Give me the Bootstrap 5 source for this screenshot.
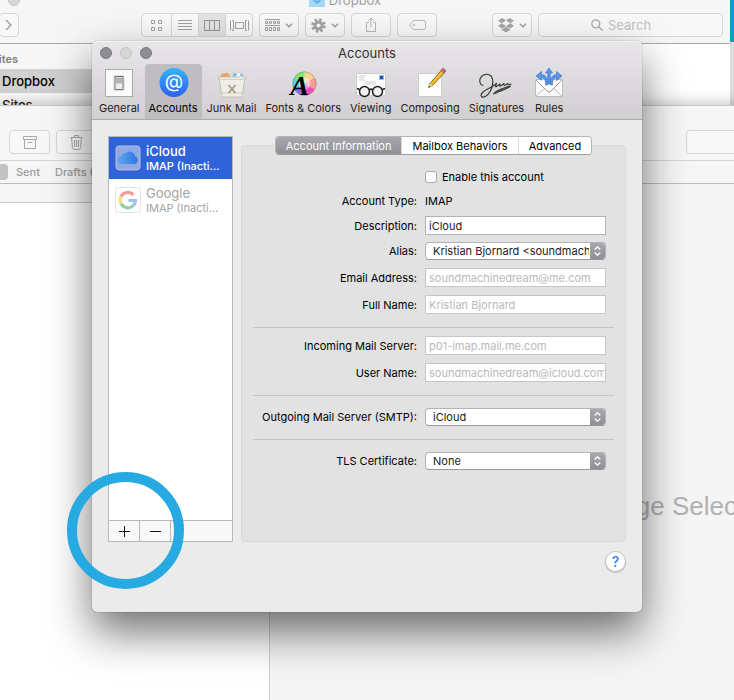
<!DOCTYPE html>
<html lang="en">
<head>
<meta charset="utf-8">
<meta name="viewport" content="width=device-width, initial-scale=1">
<title>Accounts</title>
<link href="https://cdn.jsdelivr.net/npm/bootstrap@5.3.0/dist/css/bootstrap.min.css" rel="stylesheet">
<style>
  body { font-family: Inter, "Liberation Sans", sans-serif; font-size: 11px; line-height: 14px; color: #000; }
  button { font-family: inherit; }
  svg { display: block; flex: none; }
  .desktop { background: #dcdcdc; }
  .desk-strip { top: 0; right: 0; width: 6px; height: 41px; background: #009fc8; border-bottom: 1px solid #777; box-sizing: content-box; }
  .win { position: absolute; }

  /* file browser window */
  .finder { top: -11px; left: -40px; right: 4px; height: 160px; background: #fff; }
  .finder-head { background: #f6f6f6; border-bottom: 1px solid #a9a9a9; }
  .finder-title { height: 22px; font-size: 13px; color: #a0a0a0; }
  .light { width: 12px; height: 12px; border-radius: 50%; border: 1px solid #c4c4c4; background: #d6d6d6; }
  .light.on { background: #8e8d92; border-color: #7b7a7f; }
  .finder-title .lights { left: 8px; top: 5px; }
  .finder-tools { padding: 2px 7px 6px 19px; gap: 6px; }
  .tool { height: 24px; min-width: 40px; padding: 0; border: 1px solid #d6d6d6; border-radius: 4px; background: #f8f8f8; color: #a6a6a6; display: inline-flex; align-items: center; justify-content: center; gap: 5px; }
  .tool.narrow { min-width: 20px; }
  .tool-group { margin-left: 116px; }
  .tool-group .tool { min-width: 28px; border-radius: 0; margin-left: -1px; width: 28px; }
  .tool-group .tool:first-child { border-radius: 4px 0 0 4px; margin-left: 0; width: 31px; }
  .tool-group .tool:last-child { border-radius: 0 4px 4px 0; }
  .tool-group .tool.picked { background: #e2e2e2; }
  .cloud-tool { margin-left: 49px; }
  .find-box { font-size: 13px; color: #c2c2c2; }
  .find-box input { width: 62px; border: 0; padding: 0; background: none; font-size: 13px; color: #c2c2c2; }
  .find-box input::placeholder { color: #c2c2c2; opacity: 1; }
  .places { width: 172px; background: #f7f7f7; font-size: 13px; padding-top: 7px; }
  .places h2 { font-size: 11px; line-height: 17px; font-weight: 600; color: #7c7c7c; padding-left: 9px; margin: 0 0 1px; }
  .places a { display: block; padding-left: 42px; line-height: 24px; height: 24px; color: #222; text-decoration: none; font-weight: 500; }
  .places a.picked { background: #d0d0d0; color: #000; }

  /* mail window */
  .mail { top: 105px; left: 0; right: -316px; bottom: -128px; background: #f6f6f6; border-top: 1px solid #c8c8c8; box-shadow: 0 0 14px rgba(0,0,0,.3); }
  .mail-tools { padding: 24px 8px 6px 9px; gap: 6px; border-bottom: 1px solid #d3d3d3; }
  .mail-tools .tool { min-width: 41px; }
  .mail-find { width: 356px; margin-left: auto; }
  .mail-favs { height: 23px; border-bottom: 1px solid #bdbdbd; color: #9c9c9c; gap: 15px; }
  .mail-favs a { color: inherit; text-decoration: none; font-weight: 500; }
  .fav-pill { width: 8px; height: 16px; background: #c2c2c2; border-radius: 0 4px 4px 0; margin-right: -7px; }
  .messages { width: 270px; border-right: 1px solid #d0d0d0; background: #fff; }
  .messages-sort { height: 19px; background: #f6f6f6; border-bottom: 1px solid #c6c6c6; }
  .reader { background: #f5f5f5; color: #b2b2b2; font-family: "Liberation Sans", Arial, sans-serif; font-size: 26px; line-height: 32px; padding-right: 28px; }

  /* accounts dialog */
  .prefs { top: 41px; left: 92px; right: 92px; background: #ebebeb; border-radius: 5px; box-shadow: 0 0 1px rgba(0,0,0,.6), 0 20px 44px rgba(0,0,0,.56); }
  .prefs-head { background: linear-gradient(#e8e6e8, #d1cfd1); border-bottom: 1px solid #ababab; border-radius: 5px 5px 0 0; border-top: 1px solid #f4f3f4; }
  .prefs-title { height: 22px; font-size: 13px; color: #333; }
  .prefs-title .lights { left: 8px; top: 5px; }
  .lights { gap: 8px; }
  .prefs-tabs { padding-left: 3px; gap: 1px; }
  .pane-tab { border: 0; background: none; padding: 4px 4px 3px; height: 55px; font-size: 11px; line-height: 16px; color: #1c1c1c; border-radius: 4px 4px 0 0; display: flex; flex-direction: column; align-items: center; white-space: nowrap; }
  .pane-tab.picked { background: #bfbdc0; color: #000; }
  .prefs-body { padding: 16px 16px 40px; }
  .accounts { width: 125px; border: 1px solid #b9b9b9; background: #fff; }
  .account { border: 0; width: 100%; height: 42px; padding: 0 6px; gap: 5px; background: #fff; color: #a3a3a3; text-align: left; }
  .account.picked { background: #2f63d9; color: #fff; }
  .account b { display: block; font-size: 13px; line-height: 15px; font-weight: 400; }
  .account small { display: block; font-size: 11px; line-height: 14px; }
  .account.picked b, .account.picked small { font-weight: 500; }
  .list-foot { border-top: 1px solid #b9b9b9; background: #f8f8f8; height: 21px; }
  .list-foot button { width: 31px; border: 0; border-right: 1px solid #b9b9b9; background: none; padding: 0; color: #111; }
  .halo { left: -42px; top: -49px; width: 117px; height: 117px; border: 10px solid #27aae1; border-radius: 50%; pointer-events: none; }
  .panel { margin-top: 9px; margin-left: 8px; padding: 0 11px 71px; background: #e2e2e2; border: 1px solid #d9d9d9; border-radius: 4px; }
  .seg { margin-top: -10px; border-radius: 4px; border: 1px solid #b4b4b4; border-bottom-color: #9c9c9c; background: #fff; overflow: hidden; }
  .seg button { border: 0; background: #fff; height: 17px; padding: 0 10px; font-size: 11px; line-height: 16px; white-space: nowrap; }
  .seg button + button { border-left: 1px solid #d9d9d9; }
  .seg button.picked { background: linear-gradient(#a9a8ae, #908f95); color: #fff; }
  .frow { display: grid; grid-template-columns: 164px minmax(0, 1fr); column-gap: 8px; padding-right: 8px; min-height: 19px; align-items: center; }
  .frow label, .frow .cap { text-align: right; white-space: nowrap; }
  .frow label.enable { text-align: left; }
  .frow .box { height: 19px; border: 1px solid #b3b3b3; border-radius: 0; background: #fff; padding: 0 1px 0 3px; font-size: 11px; color: #222; width: 100%; min-width: 0; }
  .frow .box:disabled { color: #b9b9b9; border-color: #c6c6c6; opacity: 1; }
  .pop { display: grid; height: 18px; border: 1px solid #b4b4b4; border-bottom-color: #989898; border-radius: 4px; background: #fff; overflow: hidden; }
  .pop select { grid-area: 1/1; appearance: none; border: 0; background: none; padding: 0 0 0 7px; margin-right: 16px; font-size: 11px; line-height: 16px; color: #222; min-width: 0; }
  .pop span { grid-area: 1/1; justify-self: end; width: 15px; background: linear-gradient(#a9a8ae, #908f95); display: grid; place-items: center; pointer-events: none; }
  .tickbox { appearance: none; width: 12px; height: 12px; border: 1px solid #a9a9a9; border-radius: 3px; background: #fff; margin: 0 5px 0 0; }
  .g5 { margin-top: 5px; } .g6 { margin-top: 6px; } .g8 { margin-top: 8px; } .g12 { margin-top: 12px; }
  .rule { margin: 13px 0 0; border: 0; border-top: 1px solid #c6c6c6; opacity: 1; }
  .rule + .g12 { margin-top: 11px; }
  .help { width: 21px; height: 21px; border-radius: 50%; border: 1px solid #c2c2c2; background: #fff; color: #2b78f5; font-size: 14px; line-height: 18px; font-weight: 500; padding: 0; margin-top: 9px; box-shadow: 0 1px 1px rgba(0,0,0,.2); }
</style>
<script src="https://cdn.jsdelivr.net/npm/bootstrap@5.3.0/dist/js/bootstrap.bundle.min.js"></script>
</head>
<body>
<div class="desktop position-relative overflow-hidden vh-100">
  <div class="desk-strip position-absolute"></div>

  <section class="win finder" aria-label="Dropbox">
    <div class="finder-head">
      <div class="finder-title d-flex align-items-center justify-content-center position-relative">
        <div class="lights d-flex position-absolute"><span class="light"></span><span class="light"></span><span class="light"></span></div>
        <svg class="me-1" width="16" height="14" viewBox="0 0 16 14"><path d="M0 1h6l1 1h9v12H0z" fill="#8fcdf0"/><path d="M0 4h16v10H0z" fill="#a3d9f6"/><path d="M5 6l3 2 3-2 1 2-4 3-4-3z" fill="#68b4e2"/></svg>
        <span>Dropbox</span>
      </div>
      <div class="finder-tools d-flex">
        <div class="d-flex">
          <button class="tool narrow" aria-label="Back"></button>
          <button class="tool narrow" aria-label="Forward"><svg width="8" height="12" viewBox="0 0 8 12" fill="none" stroke="#a6a6a6" stroke-width="1.5"><path d="M1 1l5 5-5 5"/></svg></button>
        </div>
        <div class="tool-group d-flex">
          <button class="tool" aria-label="Icons"><svg width="11" height="11" fill="none" stroke="#a0a0a0"><path d="M.5.5h3v3h-3zM7.500.5h3v3h-3zM.5 7.500h3v3h-3zM7.500 7.500h3v3h-3z"/></svg></button>
          <button class="tool" aria-label="List"><svg width="14" height="11" stroke="#a0a0a0"><path d="M0 .5h14M0 3.500h14M0 6.500h14M0 9.500h14"/></svg></button>
          <button class="tool picked" aria-label="Columns"><svg width="16" height="11" fill="none" stroke="#949494"><path d="M.5.5h15v10H.5zM5.500.5v10M10.500.5v10"/></svg></button>
          <button class="tool" aria-label="Cover flow"><svg width="19" height="11" fill="none" stroke="#a0a0a0"><path d="M5.500 2.500h8v6h-8zM.5.500v10M2 .500h1.500v10H2M18.500.500v10M17 .500h-1.500v10H17"/></svg></button>
        </div>
        <button class="tool" aria-label="Arrange"><svg width="15" height="13" fill="none" stroke="#a0a0a0"><path d="M0 .5h15M0 6.500h15M.5 2.500h2v2h-2zM4.500 2.500h2v2h-2zM8.500 2.500h2v2h-2zM12.500 2.500h2v2h-2zM.5 8.500h2v3h-2zM4.500 8.500h2v3h-2zM8.500 8.500h2v3h-2zM12.500 8.500h2v3h-2z"/></svg><svg width="8" height="5" fill="none" stroke="#a0a0a0" stroke-width="1.500"><path d="M1 .7l3 3 3-3"/></svg></button>
        <button class="tool" aria-label="Actions"><svg width="15" height="15" viewBox="0 0 15 15"><circle cx="7.500" cy="7.500" r="3.600" fill="none" stroke="#a3a3a3" stroke-width="3"/><circle cx="7.500" cy="7.500" r="6" fill="none" stroke="#a3a3a3" stroke-width="2.600" stroke-dasharray="2.500 2.212"/></svg><svg width="8" height="5" fill="none" stroke="#a0a0a0" stroke-width="1.500"><path d="M1 .7l3 3 3-3"/></svg></button>
        <button class="tool" aria-label="Share"><svg width="12" height="16" fill="none" stroke="#b4b4b4"><path d="M4 5.500H1.500v9h9v-9H8M6 10V1M3.500 3.500L6 1l2.500 2.500"/></svg></button>
        <button class="tool" aria-label="Tags"><svg width="17" height="10" fill="none" stroke="#b9b9b9"><path d="M4.500.500h10q2 0 2 2v5q0 2-2 2h-10L.600 5z"/><circle cx="5" cy="5" r=".8"/></svg></button>
        <button class="tool cloud-tool" aria-label="Dropbox menu"><svg width="16" height="15" viewBox="0 0 16 15" fill="#a6a6a6"><path d="M4.500 0L8 2.400 3.500 5.200 0 2.500zM11.500 0L16 2.500l-3.500 2.700L8 2.400zM3.500 5.200L8 8 4.500 10.500 0 8zM12.500 5.200L16 8l-4.500 2.500L8 8zM8 8.800l3.500 2.400 1-.5v1L8 14.500l-4.500-2.800v-1l1 .5z"/></svg><svg width="8" height="5" fill="none" stroke="#a0a0a0" stroke-width="1.500"><path d="M1 .7l3 3 3-3"/></svg></button>
        <label class="tool find-box flex-grow-1"><svg width="12" height="12" fill="none" stroke="#a6a6a6" stroke-width="1.200"><circle cx="4.800" cy="4.800" r="4"/><path d="M7.800 7.800l3.700 3.700"/></svg><input type="text" placeholder="Search" aria-label="Search"></label>
      </div>
    </div>
    <nav class="places">
      <h2>Favorites</h2>
      <a href="#" class="picked">Dropbox</a>
      <a href="#">Sites</a>
    </nav>
  </section>

  <section class="win mail d-flex flex-column" aria-label="Mail">
    <div class="mail-tools d-flex">
      <button class="tool" aria-label="Archive"><svg width="14" height="13" fill="none" stroke="#a9a9a9"><path d="M.5.500h13v3H.5zM1.500 3.500v9h11v-9M4.500 6.500h5"/></svg></button>
      <button class="tool" aria-label="Delete"><svg width="13" height="15" fill="none" stroke="#a9a9a9"><path d="M.5 2.500h12M4.500 2.500v-2h4v2M1.500 2.500l1 10q.2 2 2 2h4q1.800 0 2-2l1-10M4.500 5v7M6.500 5v7M8.500 5v7"/></svg></button>
      <span class="tool mail-find"></span>
    </div>
    <nav class="mail-favs d-flex align-items-center">
      <span class="fav-pill"></span><a href="#">Sent</a><a href="#">Drafts (2)</a>
    </nav>
    <div class="d-flex flex-grow-1">
      <div class="messages"><div class="messages-sort"></div></div>
      <div class="reader flex-grow-1 d-flex align-items-center justify-content-center">No Message Selected</div>
    </div>
  </section>

  <section class="win prefs" role="dialog" aria-label="Accounts">
    <div class="prefs-head">
      <div class="prefs-title d-flex align-items-center justify-content-center position-relative">
        <div class="lights d-flex position-absolute"><span class="light on"></span><span class="light"></span><span class="light on"></span></div>
        <span>Accounts</span>
      </div>
      <div class="prefs-tabs d-flex">
        <button class="pane-tab"><svg width="32" height="32" viewBox="0 0 32 32"><rect x="2.500" y="1.500" width="27" height="27" fill="#fafafa" stroke="#aaa"/><rect x="10.500" y="7" width="11" height="16" rx="2" fill="#ddd"/><rect x="12" y="8.500" width="8" height="13" fill="#eee" stroke="#777"/><path d="M13 9.500h6v6h-6z" fill="#b5b5b5"/></svg><span>General</span></button>
        <button class="pane-tab picked"><svg width="32" height="32" viewBox="0 0 32 32"><defs><linearGradient id="at" x2="0" y2="1"><stop stop-color="#35b4fa"/><stop offset="1" stop-color="#2c5ff6"/></linearGradient></defs><circle cx="17" cy="14.500" r="14.500" fill="url(#at)"/><text x="17" y="20" text-anchor="middle" font-size="19" font-family="Inter" fill="#fff">@</text></svg><span>Accounts</span></button>
        <button class="pane-tab"><svg width="32" height="32" viewBox="0 0 32 32"><path d="M4 9l2-3 6-1 2 3 3-3 4 1 2-2 4 4v3H4z" fill="#f2f6fa" stroke="#bbb" stroke-width=".6"/><path d="M4 9l2-3 6-1 2 4z" fill="#f3a34d"/><path d="M16 8l2-3 3 1-1 3zM24 8l1-3 3 3z" fill="#78b9e4"/><path d="M2.500 9h27v3h-1l-2.500 17h-20L3.500 12h-1z" fill="#eeeee7" stroke="#bab9b2" stroke-width=".8"/><path d="M3 11.500h26M6 25h20" stroke="#d0cfc4"/><path d="M12.500 17l7 8M19.500 17l-7 8" stroke="#a09a83" stroke-width="1.700"/></svg><span>Junk Mail</span></button>
        <button class="pane-tab"><svg width="32" height="32" viewBox="0 0 32 32"><g transform="translate(17.500 15.500)"><path d="M0 0V-12A12 12 0 0 1 10.400-6z" fill="#ffd28a"/><path d="M0 0L10.400-6A12 12 0 0 1 10.400 6z" fill="#ff9a9a"/><path d="M0 0L10.400 6A12 12 0 0 1 0 12z" fill="#f34bb5"/><path d="M0 0V12A12 12 0 0 1-10.400 6z" fill="#9269f2"/><path d="M0 0L-10.400 6A12 12 0 0 1-10.400-6z" fill="#52d4e9"/><path d="M0 0L-10.400-6A12 12 0 0 1 0-12z" fill="#84e86c"/><circle r="11.600" fill="none" stroke="#888" stroke-width=".6"/><circle r="6" fill="#fff" opacity=".45"/></g><text x="12.500" y="27" text-anchor="middle" font-family="Liberation Serif" font-style="italic" font-weight="700" font-size="28" fill="#000">A</text></svg><span>Fonts &amp; Colors</span></button>
        <button class="pane-tab"><svg width="32" height="32" viewBox="0 0 32 32"><path d="M1.500 5.500h29v22h-29z" fill="#fff" stroke="#ccc"/><path d="M4 8h7M4 10h5M4 12h6M10 14h11M9 16h12" stroke="#bbb" stroke-width=".7"/><path d="M24 7h5v5h-5z" fill="#8cc4f2"/><path d="M25 8h3v3h-3z" fill="#1d4f9c"/><g fill="#eef1f2" fill-opacity=".8" stroke="#1d1d1d" stroke-width="1.500"><circle cx="9.500" cy="23.500" r="5"/><circle cx="22.500" cy="23.500" r="5"/><path d="M14.500 22q1.500-2 3 0M4.500 21.500l-2.500-1M27.500 21.500l2.500-1" fill="none"/></g></svg><span>Viewing</span></button>
        <button class="pane-tab"><svg width="32" height="32" viewBox="0 0 32 32"><path d="M4.500 5.500h23v23h-23z" fill="#fdfdfd" stroke="#ccc"/><path d="M14.500 19.500l1.500-4L28.500.900l3 2.600L18.500 17.500z" fill="#f5be2a" stroke="#75601c" stroke-width=".9"/><path d="M14.500 19.500l1.500-4 2.500 2z" fill="#e8cfa0"/><path d="M14.500 19.500l.6-1.600 1 .9z" fill="#222"/><path d="M27 2.600L29 0l3 2.500-2.200 2.700z" fill="#d6608b" stroke="#555" stroke-width=".5"/></svg><span>Composing</span></button>
        <button class="pane-tab"><svg width="34" height="32" viewBox="0 0 34 32" fill="none" stroke="#3c3c3c" stroke-width="1.200" stroke-linecap="round" stroke-linejoin="round"><path d="M4 17.500C1 17 0 13 1.500 10 3.500 6 9 5 12 8c3 3.500 2 11-1 15.500C9 27.500 4.500 30.500 2.500 28.500c-2-2.500 3-6 8-8.500 4-2 6-3.500 7-4.500-1 2-1.500 4 0 3s2.500-2 3.500-2.500c0 1.500-1 2.500.5 2l3.500-2.500c0 1-.5 2 .5 2s2.500-2 3.500-2c-.5 1 0 1.500 1 1.200l2-.7M14.500 26c2-3.500 9-5.500 17-8-3 3-8 4-11.500 5.500-2 1-3 2-3.500 2"/></svg><span>Signatures</span></button>
        <button class="pane-tab"><svg width="32" height="32" viewBox="0 0 32 32"><path d="M2.500 11.500h27v17h-27z" fill="#fafafa" stroke="#bdbdbd"/><path d="M3 28l9-8M29 28l-9-8" stroke="#bbb"/><path d="M3 12l11 11q2 2 4 0l11-11" fill="#fff" stroke="#999"/><g fill="#5796eb" stroke="#2b62b5" stroke-width=".5"><path d="M14.700 16V5h-2.200L16 0l3.500 5h-2.200v11z"/><path d="M12.500 17q.5-7-4-7.500v3L3 8l5.500-4.500v3q7 .5 6 10.500z"/><path d="M19.500 17q-.5-7 4-7.500v3L29 8l-5.500-4.500v3q-7 .5-6 10.500z"/></g></svg><span>Rules</span></button>
      </div>
    </div>

    <div class="prefs-body">
      <div class="d-flex">
        <div class="accounts d-flex flex-column flex-shrink-0">
          <button class="account picked d-flex align-items-center">
            <svg width="26" height="26" viewBox="0 0 26 26"><defs><linearGradient id="sky"><stop stop-color="#5aa9f2"/><stop offset="1" stop-color="#3173e1"/></linearGradient></defs><rect x="1" y="1" width="24" height="24" rx="3" fill="#90a9e6" stroke="#b6bfdc"/><path d="M7 19a4 4 0 0 1-.5-8 3.200 3.200 0 0 1 4-2.500 5.500 5.500 0 0 1 9.700 3A3.900 3.900 0 0 1 19.500 19z" fill="url(#sky)"/></svg>
            <span><b>iCloud</b><small>IMAP (Inacti…</small></span>
          </button>
          <button class="account d-flex align-items-center">
            <svg width="26" height="26" viewBox="0 0 26 26"><rect x=".5" y=".5" width="25" height="25" rx="3" fill="#fff" stroke="#e2e2e2"/><g fill="none" stroke-width="3.200"><path d="M18.500 7.800A7.800 7.800 0 0 0 6 9.500" stroke="#f29a94"/><path d="M6 9.500a7.800 7.800 0 0 0 0 7" stroke="#fbdd84"/><path d="M6 16.500a7.800 7.800 0 0 0 12 2.400" stroke="#99d1a6"/><path d="M18 18.900A7.300 7.300 0 0 0 20.500 13.500H13.500" stroke="#a1bdf8"/></g></svg>
            <span><b>Google</b><small>IMAP (Inacti…</small></span>
          </button>
          <div class="list-foot d-flex position-relative mt-auto">
            <button aria-label="Add account"><svg class="mx-auto" width="11" height="11" stroke="#111"><path d="M0 5.500h11M5.500 0v11"/></svg></button>
            <button aria-label="Remove account"><svg class="mx-auto" width="11" height="11" stroke="#111"><path d="M0 5.500h11"/></svg></button>
            <div class="halo position-absolute"></div>
          </div>
        </div>

        <form class="panel flex-grow-1">
          <div class="d-flex justify-content-center">
            <div class="seg d-flex">
              <button type="button" class="picked">Account Information</button>
              <button type="button">Mailbox Behaviors</button>
              <button type="button">Advanced</button>
            </div>
          </div>
          <div class="frow g12"><span></span><label class="enable d-flex align-items-center" for="on"><input class="tickbox" type="checkbox" id="on">Enable this account</label></div>
          <div class="frow g5"><span class="cap">Account Type:</span><span>IMAP</span></div>
          <div class="frow g6"><label for="desc">Description:</label><input class="box" id="desc" type="text" value="iCloud"></div>
          <div class="frow g6"><label for="alias">Alias:</label><div class="pop"><select id="alias"><option>Kristian Bjornard &lt;soundmachinedream@me.com&gt;</option></select><span><svg width="7" height="10" fill="none" stroke="#fff" stroke-width="1.300"><path d="M.7 3.500l2.800-2.700 2.800 2.700M.7 6.500l2.800 2.700 2.800-2.700"/></svg></span></div></div>
          <div class="frow g8"><label for="mailaddr">Email Address:</label><input class="box" id="mailaddr" type="text" value="soundmachinedream@me.com" disabled></div>
          <div class="frow g8"><label for="fname">Full Name:</label><input class="box" id="fname" type="text" value="Kristian Bjornard" disabled></div>
          <hr class="rule">
          <div class="frow g8"><label for="inc">Incoming Mail Server:</label><input class="box" id="inc" type="text" value="p01-imap.mail.me.com" disabled></div>
          <div class="frow g8"><label for="uname">User Name:</label><input class="box" id="uname" type="text" value="soundmachinedream@icloud.com" disabled></div>
          <hr class="rule">
          <div class="frow g12"><label for="smtp">Outgoing Mail Server (SMTP):</label><div class="pop"><select id="smtp"><option>iCloud</option></select><span><svg width="7" height="10" fill="none" stroke="#fff" stroke-width="1.300"><path d="M.7 3.500l2.800-2.700 2.800 2.700M.7 6.500l2.800 2.700 2.800-2.700"/></svg></span></div></div>
          <hr class="rule">
          <div class="frow g12"><label for="tls">TLS Certificate:</label><div class="pop"><select id="tls"><option>None</option></select><span><svg width="7" height="10" fill="none" stroke="#fff" stroke-width="1.300"><path d="M.7 3.500l2.800-2.700 2.800 2.700M.7 6.500l2.800 2.700 2.800-2.700"/></svg></span></div></div>
        </form>
      </div>
      <div class="d-flex justify-content-end"><button class="help" aria-label="Help">?</button></div>
    </div>
  </section>
</div>
</body>
</html>
